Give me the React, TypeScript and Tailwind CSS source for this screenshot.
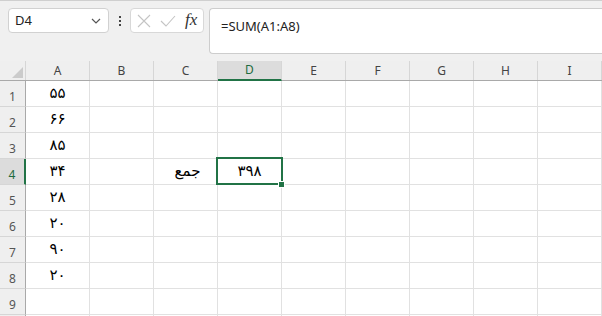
import React from "react";

const COLS = ["A", "B", "C", "D", "E", "F", "G", "H", "I"];

const COL_A = ["۵۵", "۶۶", "۸۵", "۳۴", "۲۸", "۲۰", "۹۰", "۲۰", "", ""];

const ui = "font-['Segoe_UI','Noto_Sans','Open_Sans',sans-serif]";
const fa = "font-['DejaVu_Sans','Noto_Sans',sans-serif]";

const NameBox = () => (
  <div className="ml-2 w-[101px] h-[25px] bg-white border border-[#d1d1d1] rounded-[4px] flex items-center justify-between pl-[6px] pr-[7px]">
    <span className="text-[13px] text-[#222]">D4</span>
    <svg width="10" height="6" viewBox="0 0 10 6" fill="none">
      <path d="M1 1l4 4 4-4" stroke="#555" strokeWidth="1.2" />
    </svg>
  </div>
);

const Dots = () => (
  <div className="w-[21px] h-[25px] flex flex-col items-center justify-center gap-[2px]">
    <span className="w-[2px] h-[2px] bg-[#444]"></span>
    <span className="w-[2px] h-[2px] bg-[#444]"></span>
    <span className="w-[2px] h-[2px] bg-[#444]"></span>
  </div>
);

const FxButtons = () => (
  <div className="w-[74px] h-[25px] bg-white border border-[#d8d8d8] rounded-[4px] flex items-center pl-[6px] gap-[9px]">
    <svg width="14" height="14" viewBox="0 0 14 14" fill="none">
      <path d="M1 1l12 12M13 1L1 13" stroke="#c4c4c4" strokeWidth="1.1" />
    </svg>
    <svg width="16" height="12" viewBox="0 0 16 12" fill="none">
      <path d="M1 6l5 5L15 1" stroke="#c4c4c4" strokeWidth="1.1" />
    </svg>
    <span className="font-['Liberation_Serif',serif] italic text-[17px] leading-none text-[#333] -mt-[2px]">
      fx
    </span>
  </div>
);

const Toolbar = () => (
  <div className="h-[61px] bg-[#f0f0f0] border-t border-[#cfcfcf] flex items-start pt-[7px]">
    <NameBox />
    <Dots />
    <FxButtons />
    <div className="ml-[5px] flex-1 h-[46px] bg-white border-y border-l border-[#cdcdcd] rounded-l-[4px] pl-[11px] pt-[4px]">
      <span className="text-[13px] text-[#222]">=SUM(A1:A8)</span>
    </div>
  </div>
);

const HeaderRow = () => (
  <div className="flex h-[20px] bg-[#efefef] border-b border-[#a9a9a9]">
    <div className="w-[26px] shrink-0 relative border-r border-[#d6d6d6]">
      <svg className="absolute right-[2px] bottom-[2px]" width="11" height="11" viewBox="0 0 11 11">
        <path d="M11 0V11H0Z" fill="#cbcbcb" />
      </svg>
    </div>
    {COLS.map((c) => (
      <div
        key={c}
        className={
          c === "D"
            ? "w-[64px] shrink-0 flex items-center justify-center text-[12px] text-[#1e6b40] bg-[#dcdcdc] border-r border-[#d6d6d6] border-b-2 border-b-[#217346] -mb-px"
            : "w-[64px] shrink-0 flex items-center justify-center text-[12px] text-[#444] border-r border-[#d6d6d6]"
        }
      >
        {c}
      </div>
    ))}
  </div>
);

const Row = ({ n, a }: { n: number; a: string }) => (
  <div className="flex h-[26px]">
    <div
      className={
        n === 4
          ? "w-[26px] shrink-0 flex items-center justify-center pt-[7px] text-[12px] text-[#1e6b40] bg-[#dcdcdc] border-r-2 border-[#217346] border-b border-b-[#d6d6d6]"
          : "w-[26px] shrink-0 flex items-center justify-center pt-[7px] text-[12px] text-[#555] bg-[#efefef] border-r border-[#a9a9a9] border-b border-b-[#d6d6d6]"
      }
    >
      {n < 10 ? n : null}
    </div>
    {COLS.map((c) => (
      <div
        key={c}
        className={`w-[64px] shrink-0 flex items-center justify-center border-r border-b border-[#e1e1e1] text-[15px] text-black ${fa}`}
      >
        {c === "A" ? a : null}
        {c === "C" && n === 4 ? <span className="pl-[4px]">جمع</span> : null}
        {c === "D" && n === 4 ? "۳۹۸" : null}
      </div>
    ))}
  </div>
);

export default function App() {
  return (
    <div className={`w-[602px] h-[316px] overflow-hidden bg-white relative ${ui}`}>
      <Toolbar />
      <HeaderRow />
      <div>
        {COL_A.map((a, i) => (
          <Row key={i} n={i + 1} a={a} />
        ))}
      </div>
      {/* active cell D4 */}
      <div className="absolute left-[216px] top-[157px] w-[67px] h-[28px] border-2 border-[#217346] pointer-events-none"></div>
      <div className="absolute left-[278px] top-[181px] w-[7px] h-[7px] bg-[#217346] border border-white"></div>
    </div>
  );
}
